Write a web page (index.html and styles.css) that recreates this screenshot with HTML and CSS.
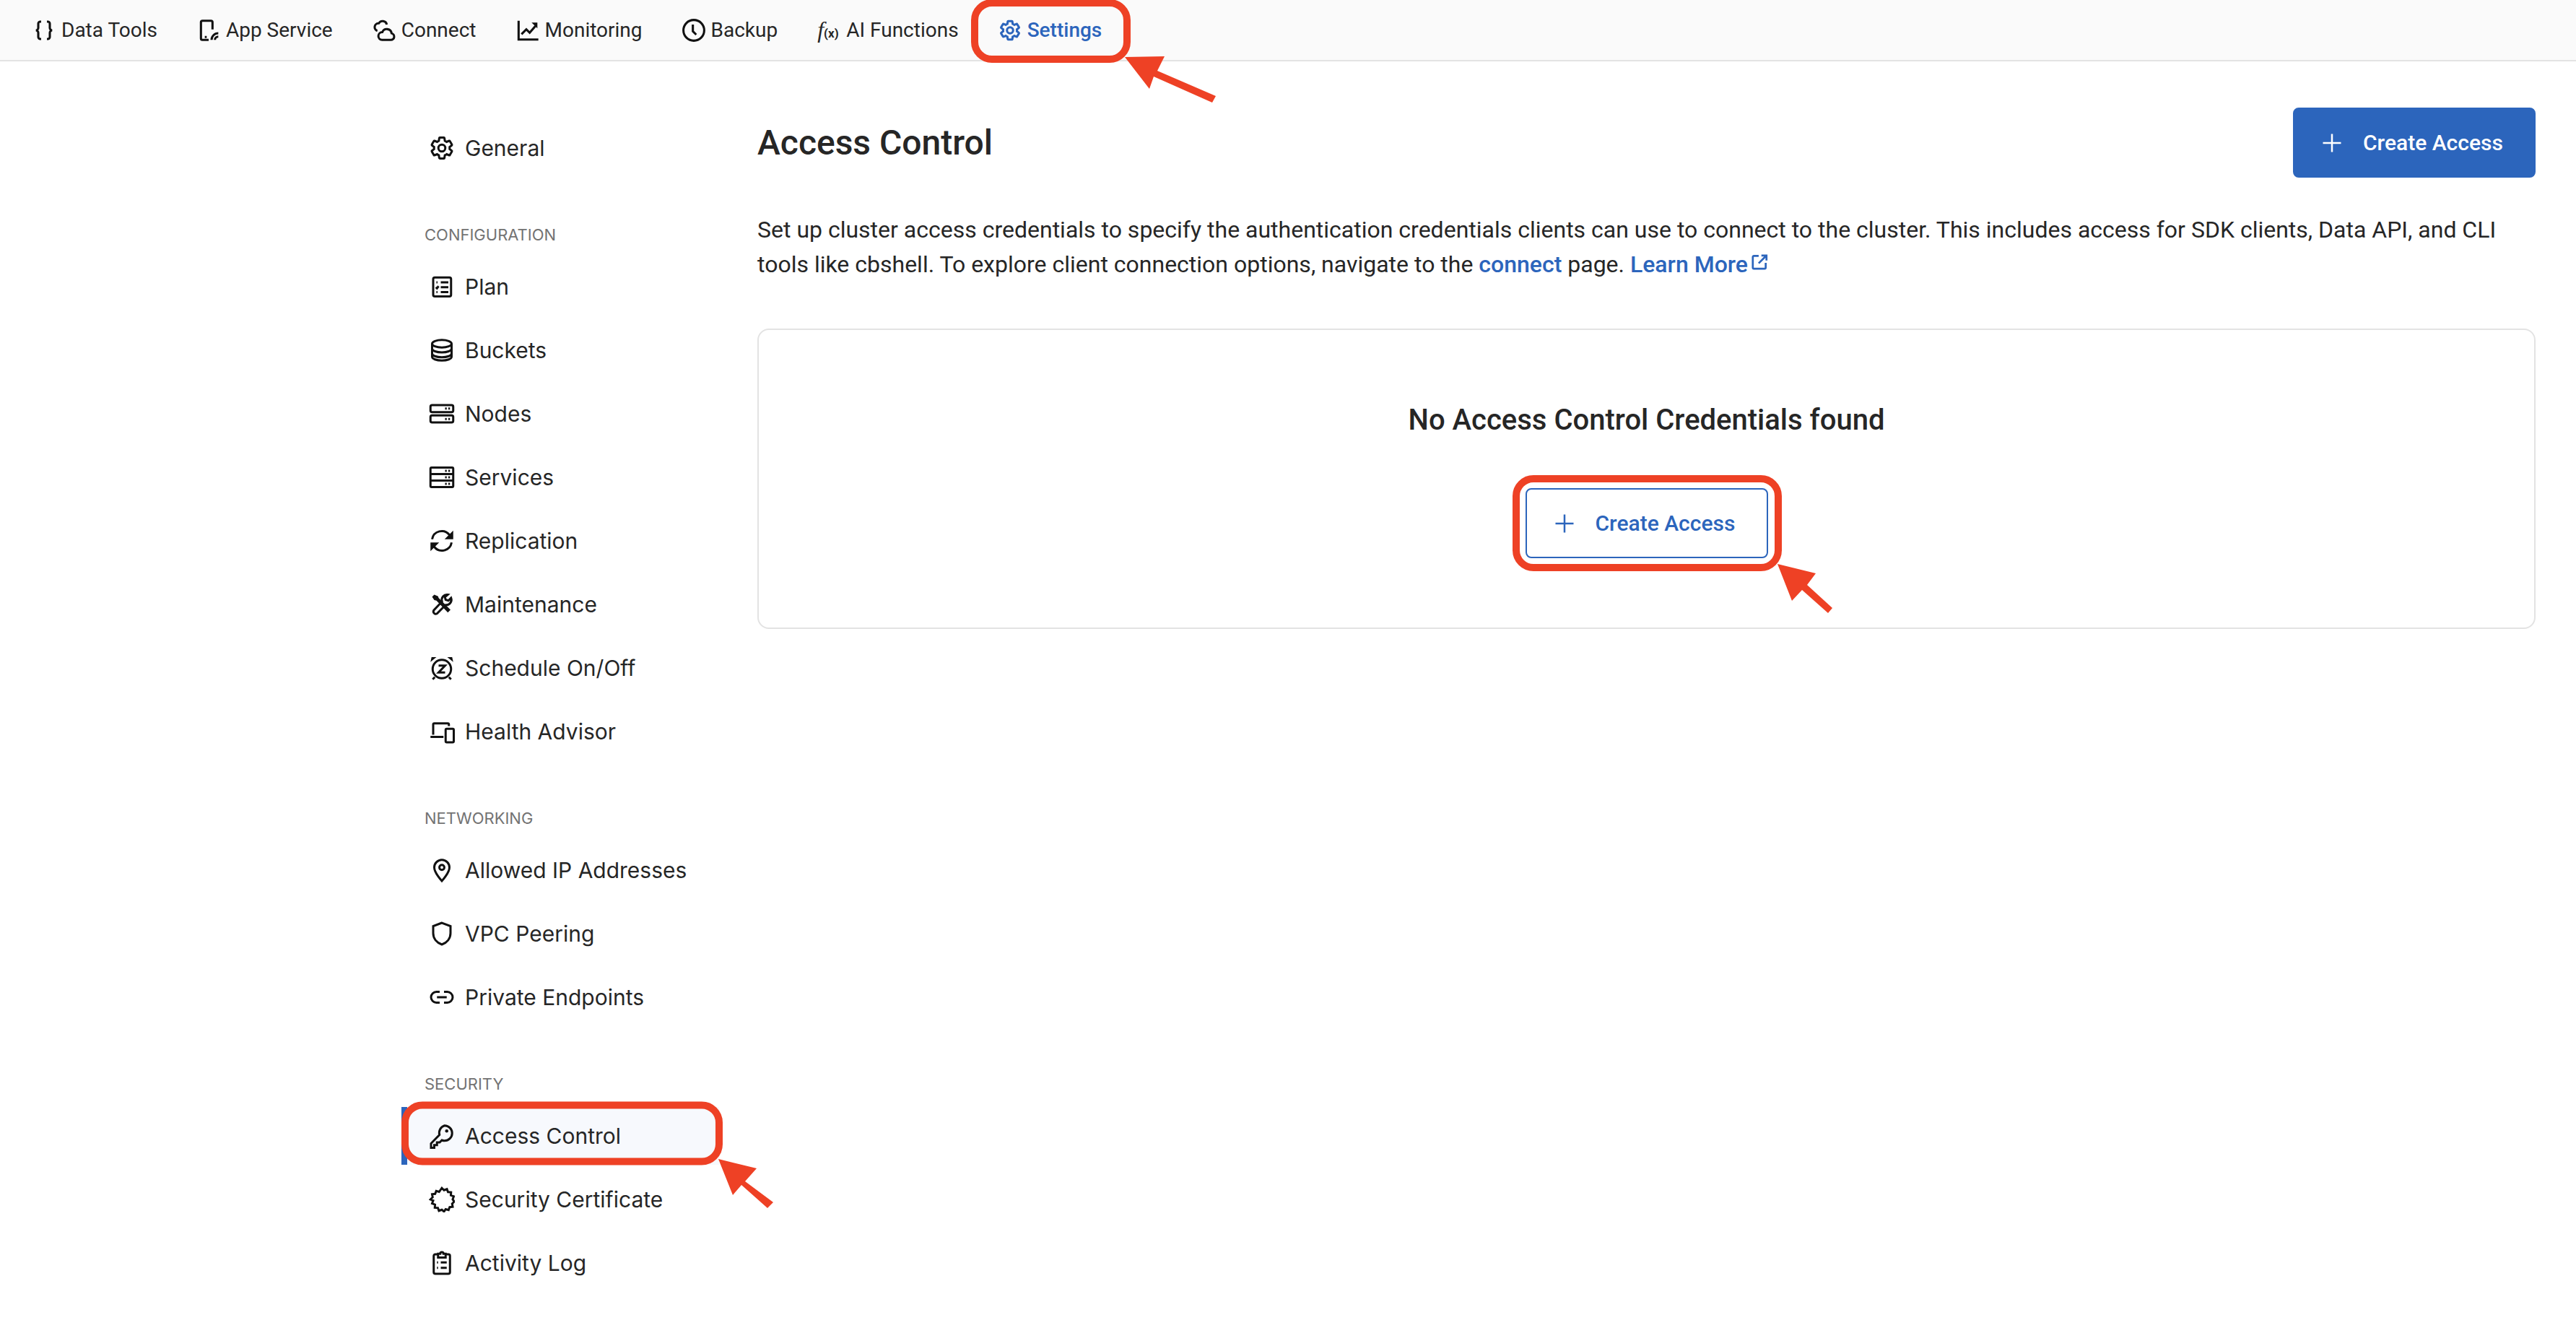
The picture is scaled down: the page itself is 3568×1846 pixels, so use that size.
FILE: index.html
```html
<!DOCTYPE html>
<html>
<head>
<meta charset="utf-8">
	<title>Access Control</title>
	<link rel="stylesheet" href="styles.css">
</head>
<body>
<svg class="defs" width="0" height="0">
	<symbol id="gear" viewBox="0 0 24 24">
		<path d="M19.14 12.94c.04-.3.06-.61.06-.94 0-.32-.02-.64-.07-.94l2.03-1.58c.18-.14.23-.41.12-.61l-1.92-3.32c-.12-.22-.37-.29-.59-.22l-2.39.96c-.5-.38-1.03-.7-1.62-.94l-.36-2.54c-.04-.24-.24-.41-.48-.41h-3.84c-.24 0-.43.17-.47.41l-.36 2.54c-.59.24-1.13.57-1.62.94l-2.39-.96c-.22-.08-.47 0-.59.22L2.74 8.87c-.12.21-.08.47.12.61l2.03 1.58c-.05.3-.09.63-.09.94s.02.64.07.94l-2.03 1.58c-.18.14-.23.41-.12.61l1.92 3.32c.12.22.37.29.59.22l2.39-.96c.5.38 1.03.7 1.62.94l.36 2.54c.05.24.24.41.48.41h3.84c.24 0 .44-.17.47-.41l.36-2.54c.59-.24 1.13-.56 1.62-.94l2.39.96c.22.08.47 0 .59-.22l1.92-3.32c.12-.22.07-.47-.12-.61l-2.01-1.58z"/>
		<circle cx="12" cy="12" r="3.2"/>
	</symbol>
	<symbol id="plus" viewBox="0 0 24 24">
		<path d="M12 2v20M2 12h20"/>
	</symbol>
</svg>

<header class="topbar">
	<a class="tab"><svg class="ico" viewBox="0 0 24 24"><path d="M9 3H8a2 2 0 0 0-2 2v4.500a2.500 2.500 0 0 1-2.500 2.500A2.500 2.500 0 0 1 6 14.500V19a2 2 0 0 0 2 2h1M15 3h1a2 2 0 0 1 2 2v4.500a2.500 2.500 0 0 0 2.500 2.500 2.500 2.500 0 0 0-2.500 2.500V19a2 2 0 0 1-2 2h-1"/></svg>Data Tools</a>
	<a class="tab"><svg class="ico" viewBox="0 0 24 24"><path d="M16 11V3.500A1.500 1.500 0 0 0 14.500 2h-9A1.500 1.500 0 0 0 4 3.500v17A1.500 1.500 0 0 0 5.500 22H12M8 19h2M15 22a7 7 0 0 1 7-7M18.500 22a3.500 3.500 0 0 1 3.500-3.500"/></svg>App Service</a>
	<a class="tab"><svg class="ico" viewBox="0 0 24 24"><path d="M5 12.500a4 4 0 0 1 1.500-7.800 4.500 4.500 0 0 1 8.300 1.300M10 22h9a3.500 3.500 0 0 0 .8-6.900 5 5 0 0 0-9.600-1.200A4 4 0 0 0 10 22z"/></svg>Connect</a>
	<a class="tab"><svg class="ico" viewBox="0 0 24 24"><path d="M2.500 2v19.500H23"/><path d="M5.500 16l5-5 3.500 3.500 6-7"/><path class="solid" d="M16 4h6v6z"/></svg>Monitoring</a>
	<a class="tab"><svg class="ico" viewBox="0 0 24 24"><circle cx="12" cy="12" r="10.800"/><path d="M11 6v7l3.500 3.500"/></svg>Backup</a>
	<a class="tab"><span class="fx"><i>f</i><small>(x)</small></span>AI Functions</a>
	<a class="tab tab-on"><svg class="ico" viewBox="0 0 24 24"><use href="#gear"/></svg>Settings</a>
</header>

<div class="layout">
	<aside class="sidebar">
		<ul class="menu">
			<li><svg class="ico" viewBox="0 0 24 24"><use href="#gear"/></svg>General</li>
		</ul>

		<h4>CONFIGURATION</h4>
		<ul class="menu">
			<li><svg class="ico" viewBox="0 0 24 24"><rect x="4" y="3.500" width="16.500" height="17.500" rx="1.500"/><path d="M11 8h7M11 12.500h7M11 17h7"/><path d="M7 8h1M7 17h1M6.500 12.500l1 1 1.500-2"/></svg>Plan</li>
			<li><svg class="ico" viewBox="0 0 24 24"><ellipse cx="12" cy="6" rx="9" ry="3.500"/><path d="M3 6v12c0 2 4 3.500 9 3.500s9-1.500 9-3.500V6M3 10.500c0 2 4 3.500 9 3.500s9-1.500 9-3.500M3 15c0 2 4 3.500 9 3.500s9-1.500 9-3.500"/></svg>Buckets</li>
			<li><svg class="ico" viewBox="0 0 24 24"><rect x="1.500" y="4" width="21" height="6.500" rx="1.500"/><rect x="1.500" y="13.500" width="21" height="6.500" rx="1.500"/><path d="M15 7.200h1.500M18 7.200h1.500M15 16.800h1.500M18 16.800h1.500"/></svg>Nodes</li>
			<li><svg class="ico" viewBox="0 0 24 24"><rect x="1.500" y="3" width="21" height="18" rx="1"/><path d="M1.500 9h21M1.500 15h21M15 6h1.500M18 6h1.500M15 12h1.500M18 12h1.500M15 18h1.500M18 18h1.500"/></svg>Services</li>
			<li><svg class="ico" viewBox="0 0 24 24"><path d="M3 10.500a9 9 0 0 1 16-4l2.500 2.500"/><path class="solid" d="M22.500 2.500v8h-8z"/><path d="M21 13.500a9 9 0 0 1-16 4L2.500 15"/><path class="solid" d="M1.500 21.500v-8h8z"/></svg>Replication</li>
			<li><svg class="ico" viewBox="0 0 24 24"><path class="solid" d="M5 3L3 5l2 3 2 .5 10.500 11 2.500-2.500L9 6l-.5-1.500z"/><path d="M20.500 6l-2.500 2.500-2.500-.8-.7-2.500L17.500 3a4.800 4.800 0 0 0-5.300 6.300L4.500 17.500a2.200 2.200 0 0 0 3 3l8-8A4.800 4.800 0 0 0 20.500 6z"/></svg>Maintenance</li>
			<li><svg class="ico" viewBox="0 0 24 24"><circle cx="12" cy="13" r="8.500"/><path d="M9 9.800h6l-6 6.400h6M5.500 20.500L3.500 22.500M18.500 20.500l2 2"/><path class="solid" d="M1.500 6.500L2.500 2h4.500zM22.500 6.500L21.500 2H17z"/></svg>Schedule On/Off</li>
			<li><svg class="ico" viewBox="0 0 24 24"><path d="M4 15V5.500A1 1 0 0 1 5 4.500h12.500a1 1 0 0 1 1 1V7"/><path d="M1.500 17h12"/><rect x="15.500" y="9.500" width="7.500" height="12.500" rx="1"/></svg>Health Advisor</li>
		</ul>

		<h4>NETWORKING</h4>
		<ul class="menu">
			<li><svg class="ico" viewBox="0 0 24 24"><path d="M12 22s-7-7.500-7-12.500a7 7 0 0 1 14 0C19 14.500 12 22 12 22z"/><circle cx="12" cy="9.500" r="2.300"/></svg>Allowed IP Addresses</li>
			<li><svg class="ico" viewBox="0 0 24 24"><path d="M12 2L4 5v6.500c0 5 3.300 8.800 8 10.500 4.700-1.700 8-5.500 8-10.500V5z"/></svg>VPC Peering</li>
			<li><svg class="ico" viewBox="0 0 24 24"><path d="M10 7H7a5 5 0 0 0 0 10h3M14 7h3a5 5 0 0 1 0 10h-3M7.500 12h9"/></svg>Private Endpoints</li>
		</ul>

		<h4>SECURITY</h4>
		<ul class="menu">
			<li class="active"><svg class="ico" viewBox="0 0 24 24"><path d="M14.500 2.500a7 7 0 0 1 0 14c-.9 0-1.700-.2-2.500-.5l-2 2H7.500v2.500H5V23H2v-4l7.800-8A7 7 0 0 1 14.500 2.500z"/><circle class="solid" cx="16.500" cy="7.500" r="1.500"/></svg>Access Control</li>
			<li><svg class="ico" viewBox="0 0 24 24"><path d="M12 1.500l2 2 2.700-1 1 2.700 2.800.2-.2 2.800 2.700 1-1 2.800 1.500 2-2 2 .5 2.800-2.800.3-1 2.700-2.700-.8-1.500 2.300-2-1.800-2.700 1-1-2.700-2.800-.2.200-2.800-2.700-1 1-2.700L1.500 12l2-2-.5-2.800 2.800-.3 1-2.700 2.700.8z"/></svg>Security Certificate</li>
			<li><svg class="ico" viewBox="0 0 24 24"><path d="M8.500 4H6a1.500 1.500 0 0 0-1.500 1.500v15A1.500 1.500 0 0 0 6 22h12a1.500 1.500 0 0 0 1.500-1.500v-15A1.500 1.500 0 0 0 18 4h-2.500"/><path d="M8.500 3.500h2a1.500 1.500 0 0 1 3 0h2V7h-7zM11 11.500h5.500M11 16.500h5.500M7.500 11.500h1M7.500 16.500h1"/></svg>Activity Log</li>
		</ul>
	</aside>

	<main class="content">
		<div class="head">
			<h1>Access Control</h1>
			<button class="btn btn-fill"><svg class="plus" viewBox="0 0 24 24"><use href="#plus"/></svg>Create Access</button>
		</div>
		<p class="intro">Set up cluster access credentials to specify the authentication credentials clients can use to connect to the cluster. This includes access for SDK clients, Data API, and CLI<br>tools like cbshell. To explore client connection options, navigate to the <a>connect</a> page. <a>Learn More<svg class="ext" viewBox="0 0 24 24"><path d="M11 4H5a1.500 1.500 0 0 0-1.500 1.500V19A1.500 1.500 0 0 0 5 20.500h13.500A1.500 1.500 0 0 0 20 19v-6M14.500 3.500H21V10M21 3.500L11 13.500"/></svg></a></p>
		<section class="empty">
			<h2>No Access Control Credentials found</h2>
			<button class="btn btn-line"><svg class="plus" viewBox="0 0 24 24"><use href="#plus"/></svg>Create Access</button>
		</section>
	</main>
</div>

<!-- red marks drawn on top of the screenshot -->
<svg class="marks" width="3568" height="1846" viewBox="0 0 3568 1846">
	<rect x="1350" y="4" width="211" height="78" rx="24"/>
	<polygon points="1558,79 1613,78 1603,98 1684,133 1679,142 1598,106 1592,123"/>
	<rect x="561" y="1530.500" width="435" height="78" rx="24"/>
	<polygon points="995,1605 1048,1618 1032,1636 1071,1665 1063,1673 1027,1641 1015,1655"/>
	<rect x="2100" y="663" width="363" height="123" rx="24"/>
	<polygon points="2462,781 2515,794 2503,810 2538,842 2532,849 2496,817 2482,832"/>
</svg>
</body>
</html>
```
FILE: styles.css
```css
*{margin: 0;padding: 0;box-sizing: border-box;}
html,body{
	width: 3568px;
	height: 1846px;
	overflow: hidden;
	background: #fff;
}
body{
	position: relative;
	color: #262626;
	font-family: "Roboto", "Liberation Sans", sans-serif;
}
.defs{position: absolute;}
a{color: inherit;text-decoration: none;}

/* top tabs */
.topbar{
	display: flex;
	align-items: center;
	gap: 55px;
	height: 85px;
	padding-left: 45px;
	background: #fafafa;
	border-bottom: 2px solid #e3e3e3;
	font-size: 28px;
}
.tab{
	display: flex;
	align-items: center;
	gap: 8px;
}
.tab .ico{width: 32px;height: 32px;stroke-width: 2.300;}
.tab-on{color: #2c65bc;font-weight: 500;}
.fx{
	width: 32px;
	font-family: "Liberation Serif", serif;
	font-size: 32px;
	white-space: nowrap;
}
.fx small{font-family: "Roboto", sans-serif;font-size: 17px;font-weight: 700;}

.ico{
	flex: none;
	fill: none;
	stroke: currentColor;
	stroke-width: 2;
	color: #111;
}
.tab-on .ico{color: #2c65bc;}
.solid{fill: currentColor;stroke: none;}

.layout{display: flex;}

/* left menu */
.sidebar{
	width: 493px;
	margin-left: 556px;
	padding-top: 80px;
	font-family: "Inter", "Liberation Sans", sans-serif;
	font-size: 30px;
}
.sidebar h4{
	margin: 64px 0 16px 32px;
	line-height: 32px;
	font-size: 22px;
	font-weight: 400;
	color: #737373;
}
.menu{
	display: flex;
	flex-direction: column;
	gap: 8px;
	list-style: none;
}
.menu li{
	display: flex;
	align-items: center;
	gap: 14px;
	height: 80px;
	padding-left: 38px;
	width: 440px;
	border-left: 8px solid transparent;
}
.menu li .ico{width: 36px;height: 36px;margin-left: -8px;}
.menu li.active{
	background: #f7f9fd;
	border-left-color: #2c65bc;
}

/* main column */
.content{
	flex: 1;
	padding: 64px 56px 0 0;
}
.head{
	display: flex;
	justify-content: space-between;
	align-items: center;
}
h1{
	font-size: 48px;
	font-weight: 500;
}
.intro{
	margin-top: 48px;
	font-size: 32px;
	line-height: 48px;
}
.intro a{color: #2c65bc;font-weight: 500;}
.ext{
	width: 26px;
	height: 26px;
	margin-left: 3px;
	vertical-align: 1px;
	fill: none;
	stroke: #2c65bc;
	stroke-width: 2.500;
}
.empty{
	display: flex;
	flex-direction: column;
	align-items: center;
	height: 416px;
	margin-top: 65px;
	padding-top: 97px;
	border: 2px solid #e3e3e3;
	border-radius: 16px;
}
h2{
	line-height: 56px;
	margin-bottom: 66px;
	font-size: 40px;
	font-weight: 500;
}
.btn{
	display: flex;
	align-items: center;
	gap: 28px;
	width: 336px;
	height: 97px;
	padding-left: 37px;
	border-radius: 8px;
	font-family: inherit;
	font-size: 30px;
	font-weight: 500;
}
.btn-fill{
	background: #2c65bc;
	border: 2px solid #2c65bc;
	color: #fff;
}
.btn-line{
	background: #fff;
	border: 2px solid #2c65bc;
	color: #2c65bc;
}
.plus{
	width: 30px;
	height: 30px;
	fill: none;
	stroke: currentColor;
	stroke-width: 2;
}

/* annotation layer */
.marks{
	position: absolute;
	top: 0;
	left: 0;
	pointer-events: none;
}
.marks rect{fill: none;stroke: #ee4125;stroke-width: 10;}
.marks polygon{fill: #ee4125;}
```
